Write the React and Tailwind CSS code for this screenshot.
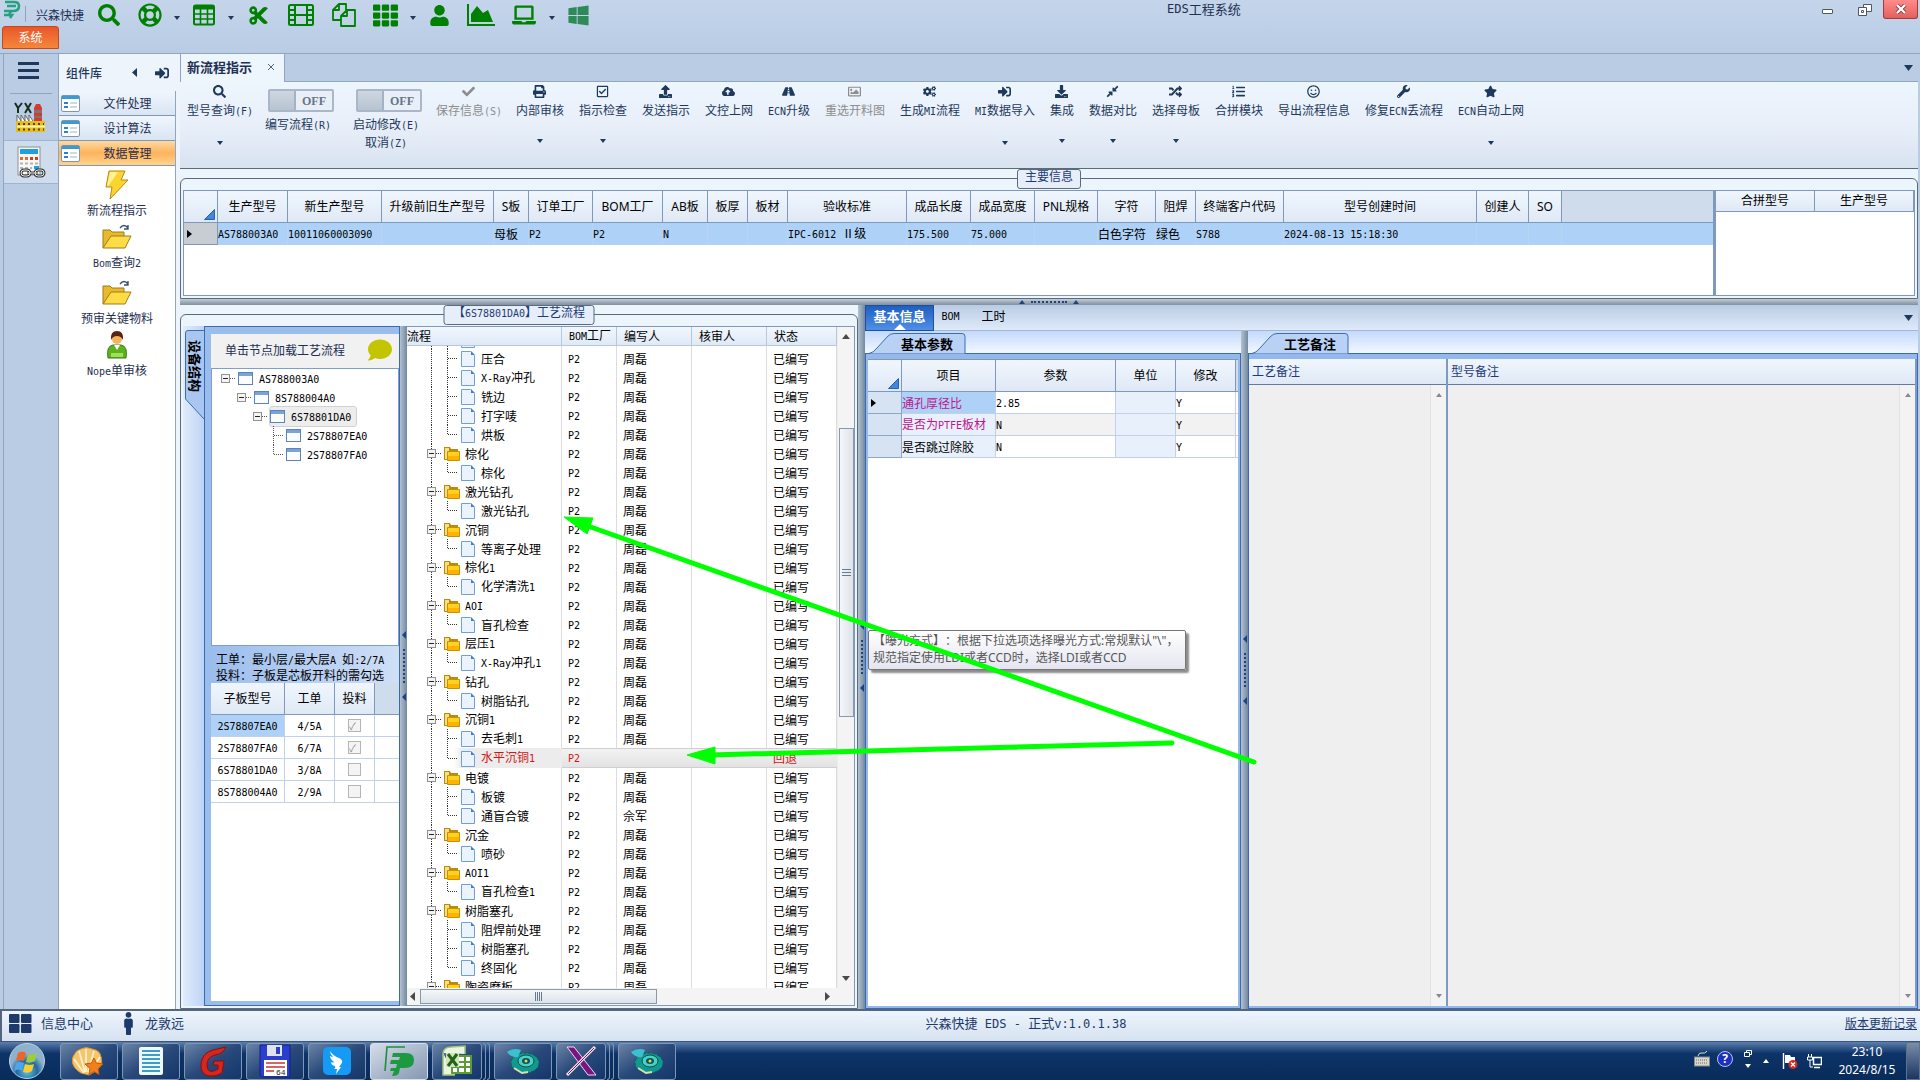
import React from 'react';
import {
  FaSearch, FaRegLifeRing, FaCut, FaTh, FaUser, FaLaptop, FaWindows, FaCheck, FaPrint,
  FaRegCheckSquare, FaUpload, FaCloudUploadAlt, FaRoad, FaRegImage, FaCogs, FaSignInAlt,
  FaDownload, FaCompressAlt, FaRandom, FaListOl, FaRegSmile, FaWrench, FaStar, FaMale, FaComment
} from 'react-icons/fa';

// CJK with half-width latin, so codes keep a 6px pitch at 12px text
function Song({ children, big }) {
  const parts = String(children).split(/([\x20-\x7e]+)/).filter(Boolean);
  const size = big ? 'text-[12px]' : 'text-[10px]';
  return parts.map((part, i) =>
    /^[\x20-\x7e]+$/.test(part)
      ? <span key={i} className={`whitespace-pre font-['DejaVu_Sans_Mono',monospace] ${size}`}>{part}</span>
      : <React.Fragment key={i}>{part}</React.Fragment>
  );
}

const Caret = ({ className = '' }) => (
  <svg width="6" height="4" viewBox="0 0 6 4" className={className} fill="currentColor"><path d="M0 0h6L3 4z" /></svg>
);

const TableIcon = () => (
  <svg width="24" height="24" viewBox="0 0 24 24" fill="none" stroke="currentColor">
    <rect x="2" y="2.500" width="20" height="19" rx="1.500" strokeWidth="2" />
    <path d="M2 4.500h20" strokeWidth="4" />
    <path d="M2 11h20M2 16h20M8.500 5v16M15.500 5v16" strokeWidth="1.600" />
  </svg>
);

const FilmIcon = () => (
  <svg width="26" height="24" viewBox="0 0 26 24" fill="none" stroke="currentColor" strokeWidth="2">
    <rect x="1" y="2" width="24" height="20" rx="1.500" />
    <path d="M7 2v20M19 2v20M7 12h12M1 7h6M1 12h6M1 17h6M19 7h6M19 12h6M19 17h6" />
  </svg>
);

const FilesIcon = () => (
  <svg width="24" height="24" viewBox="0 0 24 24" fill="none" stroke="currentColor" strokeWidth="1.800" strokeLinejoin="round">
    <path d="M9 17H1V7l6-6h7v6M7 1v6H1" />
    <path d="M15 7h8v16H9V13l6-6zM15 7v6H9" />
  </svg>
);

const AreaIcon = () => (
  <svg width="28" height="22" viewBox="0 0 28 22" fill="currentColor">
    <path d="M0 0h2v20h26v2H0zM4 18v-8l6-8 6 7 5-3 5 12z" />
  </svg>
);

const AppLogo = () => (
  <svg width="18" height="19" viewBox="0 0 18 19" fill="none" stroke="#27a082" strokeWidth="2.600">
    <path d="M2 2h9q5 0 5 4 0 5-6 5H7M4 6h9M1 11h7l-2 4M1 15h8l-2 3" />
  </svg>
);

const titleIcons = [
  { name: '查询', w: 'w-[41px]', icon: <FaSearch size={22} /> },
  { name: '帮助', w: 'w-[41px]', icon: <FaRegLifeRing size={24} />, drop: true },
  { name: '表格', w: 'w-[41px]', icon: <TableIcon />, drop: true },
  { name: '剪切', w: 'w-[42px]', icon: <FaCut size={21} /> },
  { name: '胶片', w: 'w-[43px]', icon: <FilmIcon /> },
  { name: '复制', w: 'w-[43px]', icon: <FilesIcon /> },
  { name: '网格', w: 'w-[41px]', icon: <FaTh size={25} />, drop: true },
  { name: '用户', w: 'w-[41px]', icon: <FaUser size={21} /> },
  { name: '图表', w: 'w-[42px]', icon: <AreaIcon /> },
  { name: '电脑', w: 'w-[43px]', icon: <FaLaptop size={24} />, drop: true },
  { name: '窗口', w: 'w-[41px]', icon: <FaWindows size={23} className="text-[#2e8b57]" /> }
];

function TitleBar() {
  return (
    <header className="relative flex h-[54px] shrink-0 flex-col border-b border-[#8fa5c0] bg-gradient-to-b from-[#c4d5eb] to-[#b9cce4]">
      <div className="flex h-[26px] items-start">
        <div className="ml-[3px] w-[22px]"><AppLogo /></div>
        <div className="mt-[6px] h-4 w-px bg-[#8fa3bd]" />
        <div className="ml-[10px] mt-[7px] w-[52px] whitespace-nowrap leading-4">兴森快捷</div>
        <div className="flex h-[30px] items-center text-[#008000]">
          {titleIcons.map((t) => (
            <React.Fragment key={t.name}>
              <button aria-label={t.name} className={`flex items-center justify-center ${t.w}`}>{t.icon}</button>
              {t.drop && <div className="flex w-[13px] justify-center text-[#1e395b]"><Caret className="mt-[5px]" /></div>}
            </React.Fragment>
          ))}
        </div>
        <div className="flex flex-1 pl-[568px] text-[13px] leading-[18px]"><Song big>EDS工程系统</Song></div>
      </div>
      <button className="ml-[2px] h-[23px] w-[57px] rounded-t-[3px] border border-[#c24a1a] bg-gradient-to-b from-[#e8562b] to-[#f5863c] pb-[2px] text-white">系统</button>
      <div className="absolute right-[2px] top-0 flex">
        <button aria-label="最小化" className="flex h-[19px] w-[37px] items-center justify-center"><span className="mt-1 h-[5px] w-[11px] rounded-[1px] border border-[#4c5767] bg-white" /></button>
        <button aria-label="还原" className="flex h-[19px] w-[37px] items-center justify-center">
          <svg width="14" height="13" viewBox="0 0 14 13" fill="#fff" stroke="#4c5767"><path d="M5.500 1.500h8v7h-8z" /><path d="M.5 4.500h8v8h-8z" /><path d="M3.500 7.500h2v2h-2z" /></svg>
        </button>
        <button aria-label="关闭" className="flex h-[19px] w-[35px] items-center justify-center rounded-b-[3px] border border-t-0 border-[#a33b3b] bg-gradient-to-b from-[#ff8b8b] to-[#e2605f]">
          <svg width="12" height="10" viewBox="0 0 12 10"><path d="M2 1l8 8M10 1L2 9" stroke="#8d3b3b" strokeWidth="4" /><path d="M2 1l8 8M10 1L2 9" stroke="#fff" strokeWidth="2.400" /></svg>
        </button>
      </div>
    </header>
  );
}

const FactoryIcon = () => (
  <svg width="32" height="32" viewBox="0 0 32 32">
    <path d="M1 2l3 5v5M8 2L4 7M11 2l6 10M17 2l-6 10" stroke="#14301c" strokeWidth="2" fill="none" />
    <path d="M20 20V7l2-4h4l2 4v13z" fill="#d63a2c" />
    <path d="M20 9h8v3h-8zM20 15h8v2h-8z" fill="#777" />
    <path d="M3 20v-6l4 6v-6l4 6v-6l4 6v-6l4 6" stroke="#666" fill="#fff" />
    <path d="M2 20h29v11H2z" fill="#e9bd1f" />
    <path d="M3 25.500h28" stroke="#fff2a8" strokeWidth="2" />
    <path d="M4 23h26M4 28.500h26" stroke="#554400" strokeWidth="2" strokeDasharray="2 3" />
  </svg>
);

const CalcIcon = () => (
  <svg width="30" height="32" viewBox="0 0 30 32">
    <rect x="2" y="1" width="22" height="28" fill="#f7f7f7" stroke="#8f8f8f" />
    <path d="M4 3h18v5H4z" fill="#1da1e0" />
    <path d="M4 12.500h8" stroke="#e46b2c" strokeWidth="3" strokeDasharray="3 2" />
    <path d="M14 12.500h8" stroke="#c8412b" strokeWidth="3" strokeDasharray="3 2" />
    <path d="M4 17.500h18M4 22h12" stroke="#aeb4bb" strokeWidth="2" strokeDasharray="3 2" />
    <path d="M18 20h5v3h-5z" fill="#1da1e0" />
    <g fill="none" stroke="#333" strokeWidth="3"><rect x="5" y="24" width="9" height="6" rx="3" /><rect x="19" y="24" width="9" height="6" rx="3" /><path d="M11 27h11" /></g>
    <g fill="none" stroke="#eee"><rect x="5" y="24" width="9" height="6" rx="3" /><rect x="19" y="24" width="9" height="6" rx="3" /><path d="M11 27h11" /></g>
  </svg>
);

function Rail() {
  return (
    <nav className="flex w-[55px] shrink-0 flex-col border-l border-[#8fa5c0] bg-[#b9cce4]">
      <button aria-label="菜单" className="mx-[6px] flex h-[40px] flex-col items-center justify-center gap-[4px] border-b border-[#8ea4c2] pb-[6px] pr-[5px]">
        <span className="h-[3px] w-[21px] bg-[#1e395b]" /><span className="h-[3px] w-[21px] bg-[#1e395b]" /><span className="h-[3px] w-[21px] bg-[#1e395b]" />
      </button>
      <button aria-label="工厂" className="flex h-[46px] items-center justify-center pr-[2px]"><FactoryIcon /></button>
      <button aria-label="计算" className="flex h-[44px] items-center justify-center border-y border-[#a0b4d0] bg-[#cfdced]"><CalcIcon /></button>
    </nav>
  );
}

const ListIcon = () => (
  <svg width="19" height="17" viewBox="0 0 19 17">
    <rect x=".5" y=".5" width="18" height="16" rx="1.500" fill="#fff" stroke="#7d95b5" />
    <path d="M1 1h17v3H1z" fill="#3a9bd0" />
    <path d="M3 7h4v2H3zM3 11h4v2H3z" fill="#2d7ed0" />
    <path d="M9 8h7M9 12h7" stroke="#9fb3cc" />
  </svg>
);

const BoltIcon = () => (
  <svg width="24" height="30" viewBox="0 0 24 30">
    <path d="M4 1h16l-4 9h7L5 29l2-12H1z" fill="#fbd52d" stroke="#b48a12" />
    <path d="M5 2h8L4 15l-2 1z" fill="#fff09a" />
  </svg>
);

const FolderIcon = () => (
  <svg width="30" height="25" viewBox="0 0 30 25">
    <path d="M1 24V6h7l2 2h12v5" fill="#e8b92a" stroke="#9f7d1b" />
    <path d="M1 24L9 12h20l-6 12z" fill="#fddc45" stroke="#9f7d1b" />
    <path d="M18 4q4-5 8 0M26 1v4h-4" stroke="#39506f" fill="none" strokeWidth="1.400" />
  </svg>
);

const PersonIcon = () => (
  <svg width="22" height="30" viewBox="0 0 22 30">
    <path d="M2 28q-2-12 5-13h8q7 1 5 13z" fill="#5fb21f" stroke="#3c7a12" />
    <path d="M8 15l3 5 3-5z" fill="#fff" />
    <circle cx="11" cy="9" r="5" fill="#f3b25c" />
    <path d="M5 10q-1-9 6-9t6 9q-2-4-6-4t-6 4z" fill="#5d2216" />
    <path d="M5 23h12v4H5z" fill="#9fe05a" />
  </svg>
);

const tools = [
  { name: '新流程指示', icon: <BoltIcon /> },
  { name: 'Bom查询2', icon: <FolderIcon /> },
  { name: '预审关键物料', icon: <FolderIcon /> },
  { name: 'Nope单审核', icon: <PersonIcon /> }
];

const groups = ['文件处理', '设计算法', '数据管理'];

function ComponentLibrary() {
  return (
    <aside className="flex w-[122px] shrink-0 flex-col border-l border-[#8fa5c0] bg-[#edf4fc]">
      <div className="flex h-[37px] items-center pl-[7px] text-[#1e395b]">
        <span className="w-[66px] font-medium leading-4">组件库</span>
        <svg width="5" height="9" viewBox="0 0 5 9" fill="currentColor"><path d="M5 0v9L0 4.500z" /></svg>
        <FaSignInAlt size={14} className="ml-[18px]" />
      </div>
      <div className="mr-[4px] flex flex-1 flex-col border-r border-[#8fa5c0] bg-white">
        {groups.map((g) => (
          <button
            key={g}
            className={`flex h-[25px] items-center border-b border-[#8397b5] pl-[2px] ${g === '数据管理' ? 'bg-gradient-to-b from-[#ffd9a0] via-[#fdb35a] to-[#ffd48c]' : 'bg-gradient-to-b from-[#f0f6fd] to-[#d9e5f3]'}`}
          >
            <ListIcon />
            <span className="flex-1 text-center leading-4">{g}</span>
          </button>
        ))}
        {tools.map((t) => (
          <button key={t.name} className="flex h-[54px] flex-col items-center justify-end pb-px">
            <span className="flex h-[33px] items-center">{t.icon}</span>
            <span className="leading-[18px]"><Song>{t.name}</Song></span>
          </button>
        ))}
      </div>
    </aside>
  );
}

const ribbon = [
  { name: '保存信息(S)', w: 'w-[64px]', icon: FaCheck, off: true },
  { name: '内部审核', w: 'w-[48px]', icon: FaPrint, drop: true },
  { name: '指示检查', w: 'w-[48px]', icon: FaRegCheckSquare, drop: true },
  { name: '发送指示', w: 'w-[48px]', icon: FaUpload },
  { name: '文控上网', w: 'w-[48px]', icon: FaCloudUploadAlt },
  { name: 'ECN升级', w: 'w-[42px]', icon: FaRoad },
  { name: '重选开料图', w: 'w-[60px]', icon: FaRegImage, off: true },
  { name: '生成MI流程', w: 'w-[60px]', icon: FaCogs },
  { name: 'MI数据导入', w: 'w-[60px]', icon: FaSignInAlt, drop: true },
  { name: '集成', w: 'w-[24px]', icon: FaDownload, drop: true },
  { name: '数据对比', w: 'w-[48px]', icon: FaCompressAlt, drop: true },
  { name: '选择母板', w: 'w-[48px]', icon: FaRandom, drop: true },
  { name: '合拼模块', w: 'w-[48px]', icon: FaListOl },
  { name: '导出流程信息', w: 'w-[72px]', icon: FaRegSmile },
  { name: '修复ECN丢流程', w: 'w-[78px]', icon: FaWrench },
  { name: 'ECN自动上网', w: 'w-[66px]', icon: FaStar, drop: true }
];

function RibbonButton({ item }) {
  const Icon = item.icon;
  return (
    <button disabled={item.off} className={`flex flex-col items-center ${item.w} ${item.off ? 'text-[#8d8d8d]' : 'text-[#1e395b]'}`}>
      <Icon size={13} className="mr-[2px]" />
      <span className="mt-[4px] whitespace-nowrap leading-4"><Song>{item.name}</Song></span>
      {item.drop && <Caret className="mt-[21px]" />}
    </button>
  );
}

function Toggle({ label, second }) {
  return (
    <div className="flex w-[66px] flex-col items-center text-[#1e395b]">
      <button role="switch" aria-checked="false" aria-label={label} className="mt-[4px] flex h-[23px] w-[66px] shrink-0 items-center rounded-[2px] border-2 border-[#a9b7c8] bg-[#e9eff6]">
        <span className="h-full w-[26px] border-r-2 border-[#a3b2c4] bg-gradient-to-b from-[#ced7e1] to-[#b7c3d1]" />
        <span className="flex-1 text-center font-['Liberation_Serif',serif] font-bold text-[#66758a]">OFF</span>
      </button>
      <span className="mr-[6px] mt-[4px] whitespace-nowrap leading-4"><Song>{label}</Song></span>
      {second && <span className="mr-[6px] whitespace-nowrap leading-4"><Song>{second}</Song></span>}
    </div>
  );
}

function Ribbon() {
  return (
    <div className="flex h-[87px] shrink-0 items-start gap-[15px] border-b border-[#5b6b7c] bg-gradient-to-b from-[#edf5fd] via-[#e8eff9] to-[#d8e3f0] pl-[7px] pt-[3px]">
      <RibbonButton item={{ name: '型号查询(F)', w: 'w-[66px]', icon: FaSearch, drop: true }} />
      <Toggle label="编写流程(R)" />
      <div className="ml-[7px]"><Toggle label="启动修改(E)" second="取消(Z)" /></div>
      {ribbon.map((item) => <RibbonButton key={item.name} item={item} />)}
    </div>
  );
}

const Corner = () => (
  <svg width="11" height="11" viewBox="0 0 11 11" className="ml-auto mr-[2px] mt-[16px]"><path d="M10.500.5v10H.5z" fill="#3f86dd" stroke="#2b5fae" /></svg>
);

const Pointer = () => (
  <svg width="5" height="8" viewBox="0 0 5 8" className="ml-[3px]"><path d="M0 0v8l5-4z" /></svg>
);

const mainCols = [
  { head: '生产型号', w: 'w-[70px]', val: 'AS788003A0' },
  { head: '新生产型号', w: 'w-[94px]', val: '10011060003090' },
  { head: '升级前旧生产型号', w: 'w-[112px]', val: '' },
  { head: 'S板', w: 'w-[35px]', val: '母板' },
  { head: '订单工厂', w: 'w-[64px]', val: 'P2' },
  { head: 'BOM工厂', w: 'w-[70px]', val: 'P2' },
  { head: 'AB板', w: 'w-[45px]', val: 'N' },
  { head: '板厚', w: 'w-[40px]', val: '' },
  { head: '板材', w: 'w-[40px]', val: '' },
  { head: '验收标准', w: 'w-[119px]', val: 'IPC-6012 Ⅱ级' },
  { head: '成品长度', w: 'w-[64px]', val: '175.500' },
  { head: '成品宽度', w: 'w-[64px]', val: '75.000' },
  { head: 'PNL规格', w: 'w-[63px]', val: '' },
  { head: '字符', w: 'w-[58px]', val: '白色字符' },
  { head: '阻焊', w: 'w-[40px]', val: '绿色' },
  { head: '终端客户代码', w: 'w-[88px]', val: 'S788' },
  { head: '型号创建时间', w: 'w-[193px]', val: '2024-08-13 15:18:30' },
  { head: '创建人', w: 'w-[52px]', val: '' },
  { head: 'SO', w: 'w-[33px]', val: '' }
];

const headCell = "border-b border-r border-[#8098bd] bg-gradient-to-b from-[#f0f6fd] to-[#dfe9f5] p-0 font-['Noto_Sans','Noto_Sans_CJK_SC',sans-serif] font-normal";

function Legend({ children, w }) {
  return (
    <div className={`absolute left-1/2 top-0 flex h-[20px] -translate-x-1/2 justify-center rounded-[3px] border border-[#5b6b7c] bg-[#e6eff9] leading-[11px] text-[#1e3a78] ${w}`}>
      <span><Song>{children}</Song></span>
    </div>
  );
}

function MainInfo() {
  return (
    <section className="relative flex h-[130px] shrink-0 flex-col bg-[#ecf4fc] pt-[9px]">
      <div className="flex flex-1 rounded-t-[6px] border border-[#5b6b7c] px-[2px] pb-[2px] pt-[11px]">
        <div className="min-w-0 flex-1 overflow-hidden border border-[#8098bd] bg-white">
          <table className="w-full table-fixed border-separate border-spacing-0 text-black">
            <thead>
              <tr className="h-[32px]">
                <th className={`w-[34px] ${headCell}`}><Corner /></th>
                {mainCols.map((c) => <th key={c.head} className={`${c.w} whitespace-nowrap ${headCell}`}>{c.head}</th>)}
                <th className="border-b border-[#8098bd] bg-[#cfdcec]" />
              </tr>
            </thead>
            <tbody>
              <tr className="h-[22px] bg-[#aed2f7]">
                <td className="border-r border-b border-[#8098bd] bg-[#c8cdd4] p-0"><Pointer /></td>
                {mainCols.map((c) => <td key={c.head} className="whitespace-nowrap border-r border-[#b9d4f2] p-0 leading-4"><Song>{c.val}</Song></td>)}
                <td />
              </tr>
            </tbody>
          </table>
        </div>
        <div className="w-[201px] shrink-0 border border-l-2 border-[#8098bd] bg-white">
          <table className="w-full table-fixed border-separate border-spacing-0 text-black">
            <thead><tr className="h-[21px]"><th className={headCell}>合拼型号</th><th className={headCell}>生产型号</th></tr></thead>
          </table>
        </div>
      </div>
      <Legend w="w-[64px]">主要信息</Legend>
    </section>
  );
}

function HGrip() {
  return (
    <div className="flex h-[6px] shrink-0 items-center justify-center gap-[6px] bg-gradient-to-b from-[#c3ccd4] to-[#7f909f]">
      <Caret className="rotate-180 text-[#1f4380]" />
      <span className="w-[36px] border-t-2 border-dotted border-[#1f4380]" />
      <Caret className="rotate-180 text-[#1f4380]" />
    </div>
  );
}

function VGrip() {
  return (
    <div className="flex w-[7px] shrink-0 flex-col items-center justify-center gap-[10px] bg-gradient-to-r from-[#b4c2cf] to-[#73899f] text-[#1f4380]">
      <svg width="4" height="8" viewBox="0 0 4 8" fill="currentColor"><path d="M4 0v8L0 4z" /></svg>
      <span className="h-[34px] border-l-2 border-dotted border-[#1f4380]" />
      <svg width="4" height="8" viewBox="0 0 4 8" fill="currentColor"><path d="M4 0v8L0 4z" /></svg>
    </div>
  );
}

const WindowIcon = () => (
  <svg width="15" height="13" viewBox="0 0 15 13" className="shrink-0"><rect x=".5" y=".5" width="14" height="12" fill="#fafcff" stroke="#5b84bd" /><path d="M1 1h13v3H1z" fill="#7ba3d8" /></svg>
);

const boards = [
  { code: 'AS788003A0', pad: 'pl-[9px]', open: true },
  { code: '8S788004A0', pad: 'pl-[25px]', open: true },
  { code: '6S78801DA0', pad: 'pl-[41px]', open: true, active: true },
  { code: '2S78807EA0', pad: 'pl-[57px]' },
  { code: '2S78807FA0', pad: 'pl-[57px]', last: true }
];

const MinusBox = () => (
  <svg width="17" height="19" viewBox="0 0 17 19" className="shrink-0">
    <rect x=".5" y="5.500" width="8" height="8" fill="#f4f4f4" stroke="#919191" />
    <path d="M2 9.500h5" stroke="#222" /><path d="M9 9.500h6" stroke="#555" strokeDasharray="1 1" />
  </svg>
);

const orders = [
  { code: '2S78807EA0', layer: '4/5A', used: true },
  { code: '2S78807FA0', layer: '6/7A', used: true },
  { code: '6S78801DA0', layer: '3/8A', used: false },
  { code: '8S788004A0', layer: '2/9A', used: false }
];

function BoardPanel() {
  return (
    <div className="flex w-[217px] shrink-0">
      <div className="w-[21px] bg-gradient-to-r from-[#e2ecfb] to-[#bdd3f5] pl-[2px] pt-[4px]">
        <button className="relative flex h-[90px] w-[19px] items-start justify-center pt-[10px]">
          <svg width="19" height="90" viewBox="0 0 19 90" className="absolute inset-0"><path d="M19 .5H3Q.5.500.5 3v66l18.500 20" fill="#a9c6f1" stroke="#3d6db0" /></svg>
          <span className="relative text-[13px] font-bold leading-4 text-black [text-orientation:sideways] [writing-mode:vertical-rl]">设备结构</span>
        </button>
      </div>
      <div className="flex min-w-0 flex-1 flex-col border border-[#3a6ab3] bg-[#9bbdec] pb-[4px] pl-[6px] pt-[7px]">
        <div className="flex h-[34px] items-center justify-between bg-[#f1f1f1] pb-[2px] pl-[14px] pr-[7px]">
          <span className="leading-4">单击节点加载工艺流程</span>
          <FaComment size={24} className="text-[#c4c400]" />
        </div>
        <div className="h-[278px] border border-[#7d9fd0] bg-white">
          {boards.map((b) => (
            <div key={b.code} className={`flex h-[19px] items-center ${b.pad}`}>
              {b.open
                ? <MinusBox />
                : <svg width="17" height="19" viewBox="0 0 17 19" className="shrink-0"><path d={b.last ? 'M4.500 0v10M5 9.500h10' : 'M4.500 0v19M5 9.500h10'} stroke="#555" strokeDasharray="1 1" fill="none" /></svg>}
              <div className={`flex h-[19px] items-center gap-[6px] pr-[5px] leading-4 text-black ${b.active ? 'rounded-[2px] bg-[#ededed] outline outline-[#d2d2d2]' : ''}`}>
                <WindowIcon /><span><Song>{b.code}</Song></span>
              </div>
            </div>
          ))}
        </div>
        <div className="flex h-[37px] flex-col justify-end bg-gradient-to-r from-[#9bbdec] to-[#cfdff7] pb-px pl-[5px] leading-[14px] text-black">
          <span className="whitespace-nowrap"><Song>工单：最小层/最大层A 如:2/7A</Song></span>
          <span className="whitespace-nowrap"><Song>投料：子板是芯板开料的需勾选</Song></span>
        </div>
        <div className="flex-1 bg-white">
          <table className="w-full table-fixed border-separate border-spacing-0 text-center text-black">
            <thead>
              <tr className="h-[32px]">
                <th className={`w-[74px] ${headCell}`}>子板型号</th>
                <th className={`w-[50px] ${headCell}`}>工单</th>
                <th className={`w-[40px] ${headCell}`}>投料</th>
                <th className="border-b border-[#8098bd] bg-[#cfdcec]" />
              </tr>
            </thead>
            <tbody>
              {orders.map((o, i) => (
                <tr key={o.code} className="h-[22px]">
                  <td className={`border-b border-r border-[#c3d0ea] p-0 leading-4 ${i === 0 ? 'bg-[#aed2f7]' : ''}`}><Song>{o.code}</Song></td>
                  <td className="border-b border-r border-[#c3d0ea] p-0 leading-4"><Song>{o.layer}</Song></td>
                  <td className="border-b border-r border-[#c3d0ea] p-0">
                    <input
                      type="checkbox" aria-label={o.code} disabled defaultChecked={o.used}
                      className="mx-auto block h-[13px] w-[13px] appearance-none border border-[#b5b5b5] bg-[#f4f4f4] text-[10px] leading-[11px] text-[#8a8a8a] checked:before:block checked:before:content-['✓']"
                    />
                  </td>
                  <td className="border-b border-[#c3d0ea]" />
                </tr>
              ))}
            </tbody>
          </table>
        </div>
      </div>
    </div>
  );
}

const flow = [
  { name: 'OPEN' },
  { name: '压合' },
  { name: 'X-Ray冲孔' },
  { name: '铣边' },
  { name: '打字唛' },
  { name: '烘板', last: true },
  { name: '棕化', group: true },
  { name: '棕化', last: true },
  { name: '激光钻孔', group: true },
  { name: '激光钻孔', last: true },
  { name: '沉铜', group: true },
  { name: '等离子处理', last: true },
  { name: '棕化1', group: true },
  { name: '化学清洗1', last: true },
  { name: 'AOI', group: true },
  { name: '盲孔检查', last: true },
  { name: '层压1', group: true },
  { name: 'X-Ray冲孔1', last: true },
  { name: '钻孔', group: true },
  { name: '树脂钻孔', last: true },
  { name: '沉铜1', group: true },
  { name: '去毛刺1' },
  { name: '水平沉铜1', last: true, back: true },
  { name: '电镀', group: true },
  { name: '板镀' },
  { name: '通盲合镀', last: true, writer: '佘军' },
  { name: '沉金', group: true },
  { name: '喷砂', last: true },
  { name: 'AOI1', group: true },
  { name: '盲孔检查1', last: true },
  { name: '树脂塞孔', group: true },
  { name: '阻焊前处理' },
  { name: '树脂塞孔' },
  { name: '终固化', last: true },
  { name: '陶瓷磨板', group: true }
];

function NodeArt({ node }) {
  if (node.group) {
    return (
      <svg width="54" height="19" viewBox="0 0 54 19" className="shrink-0">
        <path d="M24.500 0v19M29 9.500h6" stroke="#333" strokeDasharray="1 1" />
        <rect x="20.500" y="5.500" width="8" height="8" fill="#f4f4f4" stroke="#919191" /><path d="M22 9.500h5" stroke="#222" />
        <path d="M37 16V3h6l1 2h7v11z" fill="#b98a10" />
        <path d="M38 4h4v11h-4z" fill="#f6df86" />
        <path d="M40.500 7.500h12v9h-12z" fill="#ffd21f" stroke="#c98f07" />
        <path d="M41 12h11v4H41z" fill="#fdb400" />
      </svg>
    );
  }
  return (
    <svg width="70" height="19" viewBox="0 0 70 19" className="shrink-0">
      <path d={node.last ? 'M24.500 0v19M40.500 0v10M41 9.500h9' : 'M24.500 0v19M40.500 0v19M41 9.500h9'} stroke="#333" strokeDasharray="1 1" fill="none" />
      <path d="M54.500 2.500h9l4 4v11h-13z" fill="#eaf3fe" stroke="#6f9fd8" />
      <path d="M64 2v4h4z" fill="#3f7ed0" />
    </svg>
  );
}

const FlowCols = () => (
  <colgroup>
    <col className="w-[155px]" /><col className="w-[55px]" /><col className="w-[75px]" /><col className="w-[75px]" /><col />
  </colgroup>
);

const flowHeads = [
  { name: '流程', pad: '' },
  { name: 'BOM工厂', pad: 'pl-[7px]' },
  { name: '编写人', pad: 'pl-[7px]' },
  { name: '核审人', pad: 'pl-[7px]' },
  { name: '状态', pad: 'pl-[7px]' }
];

function FlowTree() {
  return (
    <div className="flex min-w-0 flex-1 flex-col border border-l-0 border-[#8098bd] bg-white text-black">
      <div className="flex min-h-0 flex-1">
        <div className="flex min-w-0 flex-1 flex-col">
          <table className="w-full shrink-0 table-fixed border-separate border-spacing-0 text-left">
            <FlowCols />
            <thead>
              <tr className="h-[18px]">
                {flowHeads.map((h) => <th key={h.name} className={`whitespace-nowrap border-b border-r border-[#b6c7de] bg-gradient-to-b from-[#f2f7fd] to-[#dfe9f6] p-0 font-normal leading-4 ${h.pad}`}><Song>{h.name}</Song></th>)}
              </tr>
            </thead>
          </table>
          <div className="h-0 flex-1 overflow-hidden">
            <table className="-mt-4 w-full table-fixed border-separate border-spacing-0">
              <FlowCols />
              <tbody>
                {flow.map((n, i) => {
                  const cell = n.back
                    ? 'border-y border-[#cfcfcf] bg-gradient-to-b from-[#f2f2f2] to-[#e3e3e3] p-0 pl-[6px] leading-4 text-[#d01616]'
                    : 'border-r border-[#dcdcdc] p-0 pl-[6px] leading-4';
                  return (
                    <tr key={i} className="h-[19px]">
                      <td className={`p-0 ${n.back ? 'bg-gradient-to-r from-white from-30% to-[#ececec] to-35% text-[#d01616]' : 'border-r border-[#dcdcdc]'}`}>
                        <div className="flex h-[19px] items-center gap-[4px] whitespace-nowrap leading-4"><NodeArt node={n} /><span><Song>{n.name}</Song></span></div>
                      </td>
                      <td className={cell}><Song>P2</Song></td>
                      <td className={cell}>{n.back ? '' : n.writer || '周磊'}</td>
                      <td className={cell} />
                      <td className={cell}>{n.back ? '回退' : '已编写'}</td>
                    </tr>
                  );
                })}
              </tbody>
            </table>
          </div>
        </div>
        <div className="flex w-[17px] shrink-0 flex-col items-center border-l border-[#ececec] bg-[#f4f4f4] py-[7px] text-[#4a4a4a]">
          <svg width="8" height="5" viewBox="0 0 8 5" fill="currentColor"><path d="M0 5h8L4 0z" /></svg>
          <div className="mt-[89px] flex h-[289px] w-[15px] flex-col items-center justify-center gap-[2px] border border-[#8b98a8] bg-gradient-to-r from-[#f4f7fa] to-[#dde3ea]">
            <span className="h-px w-[9px] bg-[#6a7a8c]" /><span className="h-px w-[9px] bg-[#6a7a8c]" /><span className="h-px w-[9px] bg-[#6a7a8c]" />
          </div>
          <svg width="8" height="5" viewBox="0 0 8 5" fill="currentColor" className="mt-auto"><path d="M0 0h8L4 5z" /></svg>
        </div>
      </div>
      <div className="flex h-[17px] shrink-0 items-center bg-[#f4f4f4] pl-[3px] pr-[24px] text-[#4a4a4a]">
        <svg width="5" height="9" viewBox="0 0 5 9" fill="currentColor"><path d="M5 0v9L0 4.500z" /></svg>
        <div className="ml-[5px] flex h-[15px] w-[237px] items-center justify-center gap-[1px] border border-[#8b98a8] bg-gradient-to-b from-[#f4f7fa] to-[#dde3ea]">
          <span className="h-[9px] w-px bg-[#6a7a8c]" /><span className="h-[9px] w-px bg-[#6a7a8c]" /><span className="h-[9px] w-px bg-[#6a7a8c]" /><span className="h-[9px] w-px bg-[#6a7a8c]" />
        </div>
        <svg width="5" height="9" viewBox="0 0 5 9" fill="currentColor" className="ml-auto"><path d="M0 0v9l5-4.500z" /></svg>
      </div>
    </div>
  );
}

function ProcessArea() {
  return (
    <section className="relative flex w-[678px] shrink-0 flex-col bg-[#ecf4fc] pt-[9px]">
      <div className="flex min-h-0 flex-1 rounded-t-[6px] border border-[#5b6b7c] px-[2px] pb-[2px] pt-[11px]">
        <BoardPanel />
        <VGrip />
        <FlowTree />
      </div>
      <Legend w="w-[151px]">【6S78801DA0】工艺流程</Legend>
    </section>
  );
}

function SlantTab({ children }) {
  return (
    <div className="h-[23px] shrink-0 border-b border-[#3a6ab3] bg-gradient-to-b from-[#c3d9fb] to-[#f3f8ff] pl-[4px] pt-[2px]">
      <button className="relative block h-[21px] w-[97px] pl-[32px] text-left text-[13px] font-bold leading-[18px] text-black">
        <svg width="97" height="21" viewBox="0 0 97 21" className="absolute inset-0"><path d="M0 20.500Q4 20 8 15L18 4q3-3.500 7-3.500h68q3 0 3 3v17" fill="#b9d1f5" stroke="#3d6db0" /></svg>
        <span className="relative">{children}</span>
      </button>
    </div>
  );
}

const params = [
  { item: '通孔厚径比', value: '2.85', red: true },
  { item: '是否为PTFE板材', value: 'N', red: true },
  { item: '是否跳过除胶', value: 'N' }
];

const bodyCell = 'whitespace-nowrap border-b border-r border-[#c3d0ea] p-0 leading-4';

function ParamsPanel() {
  return (
    <div className="flex w-[376px] shrink-0 flex-col">
      <SlantTab>基本参数</SlantTab>
      <div className="flex flex-1 flex-col border-x border-b border-[#3a6ab3] bg-[#94b8ec] px-[2px] pb-[2px] pt-[5px]">
        <div className="flex-1 border-t border-[#8098bd] bg-white">
          <table className="w-full table-fixed border-separate border-spacing-0 text-black">
            <thead>
              <tr className="h-[32px]">
                <th className={`w-[34px] ${headCell}`}><Corner /></th>
                <th className={`w-[94px] ${headCell}`}>项目</th>
                <th className={`w-[120px] ${headCell}`}>参数</th>
                <th className={`w-[60px] ${headCell}`}>单位</th>
                <th className={`w-[60px] ${headCell}`}>修改</th>
                <th className="border-b border-[#8098bd] bg-[#cfdcec] p-0" />
              </tr>
            </thead>
            <tbody>
              {params.map((p, i) => (
                <tr key={p.item} className="h-[22px]">
                  <td className="border-b border-r border-[#8fa5c8] bg-[#d6e3f2] p-0">{i === 0 && <Pointer />}</td>
                  <td className={`${bodyCell} ${i === 0 ? 'bg-[#aed2f7]' : 'bg-[#e8f1fb]'} ${p.red ? 'text-[#c0148c]' : ''}`}><Song>{p.item}</Song></td>
                  <td className={`${bodyCell} ${i === 1 ? 'bg-[#f2f2f2]' : ''}`}><Song>{p.value}</Song></td>
                  <td className={`${bodyCell} bg-[#e8f1fb]`} />
                  <td className={`${bodyCell} ${i === 1 ? 'bg-[#f2f2f2]' : ''}`}><Song>Y</Song></td>
                  <td className="border-b border-[#c3d0ea] p-0" />
                </tr>
              ))}
            </tbody>
          </table>
        </div>
      </div>
    </div>
  );
}

function NoteColumn({ title, w }) {
  return (
    <div className={`flex flex-col border-r-2 border-[#7e9ac0] ${w}`}>
      <div className="h-[26px] border-b border-[#5f7ba5] bg-gradient-to-b from-[#f0f6fd] to-[#dfe9f5] pl-[3px] leading-[24px] text-[#1e3a78]">{title}</div>
      <div className="flex flex-1 justify-end bg-[#efefef]">
        <div className="flex w-[16px] flex-col items-center justify-between border-l border-[#e2e2e2] bg-[#f3f3f3] py-[8px] text-[#8a8a8a]">
          <Caret className="rotate-180" /><Caret />
        </div>
      </div>
    </div>
  );
}

function DetailArea() {
  return (
    <section className="flex min-w-0 flex-1 flex-col">
      <div className="flex h-[26px] shrink-0 items-center border-b border-[#a3b7d1] bg-gradient-to-b from-[#b9cce5] to-[#dfeafa] text-black">
        <button className="relative h-[26px] w-[69px] border border-[#1f4f9c] bg-gradient-to-b from-[#1f5fc0] to-[#4f8fe6] pb-1 text-[13px] font-bold leading-5 text-white">
          基本信息
          <svg width="12" height="6" viewBox="0 0 12 6" className="absolute bottom-0 left-[28px]" fill="#fff"><path d="M0 6l6-6 6 6z" /></svg>
        </button>
        <button className="w-[33px] pb-1 text-center"><Song>BOM</Song></button>
        <button className="ml-[10px] w-[33px] pb-1 text-center">工时</button>
        <svg width="9" height="6" viewBox="0 0 9 6" fill="#1e395b" className="ml-auto mr-[5px]"><path d="M0 0h9L4.500 6z" /></svg>
      </div>
      <div className="flex min-h-0 flex-1">
        <ParamsPanel />
        <VGrip />
        <div className="flex min-w-0 flex-1 flex-col">
          <SlantTab>工艺备注</SlantTab>
          <div className="flex flex-1 border-x border-b border-[#3a6ab3] bg-[#94b8ec] pb-[2px] pt-[5px]">
            <NoteColumn title="工艺备注" w="w-[199px] shrink-0" />
            <NoteColumn title="型号备注" w="flex-1" />
          </div>
        </div>
      </div>
    </section>
  );
}

function StatusBar() {
  return (
    <footer className="flex h-[32px] shrink-0 items-center border-l-2 border-t-2 border-[#54667d] bg-gradient-to-b from-[#edf5fd] to-[#d6e2f0] pb-[6px] pl-[7px] pr-[3px] text-[#1e3a6b]">
      <div className="flex w-[300px] items-center">
        <svg width="23" height="19" viewBox="0 0 23 19" fill="#1e3a6b"><rect width="10.500" height="9" rx="1" /><rect x="12" width="10.500" height="9" rx="1" /><rect y="10" width="10.500" height="9" rx="1" /><rect x="12" y="10" width="10.500" height="9" rx="1" /></svg>
        <span className="ml-[9px] text-[13px]">信息中心</span>
        <FaMale size={23} className="ml-[24px]" />
        <span className="ml-[5px] text-[13px]">龙敦远</span>
      </div>
      <span className="flex-1 whitespace-nowrap text-center text-[13px]"><Song big>兴森快捷 EDS - 正式v:1.0.1.38</Song></span>
      <div className="flex w-[174px] justify-end"><a href="#log" className="underline">版本更新记录</a></div>
    </footer>
  );
}

const ShellArt = () => (
  <svg width="34" height="30" viewBox="0 0 34 30">
    <path d="M9 27C-1 21-1 13 2 9q2-5 7-6 5-3 11 0 8 1 9 8 3 9-7 15l-5 3z" fill="#f4c56c" stroke="#d99434" />
    <path d="M12 27L2 13M13 26L7 5M14 26V3M16 26L22 5M17 27L28 11" stroke="#fff0c8" strokeWidth="1.800" />
    <path d="M22 12l2.500 5 6.500 1-5 4.500 1 6-5-3-5 3 1-6-5-4.500 6.500-1z" fill="#f07f1c" stroke="#c75b0a" />
  </svg>
);
const DocArt = () => (
  <svg width="26" height="30" viewBox="0 0 26 30">
    <rect x="1" y="1" width="24" height="28" rx="2" fill="#eef7fb" />
    <path d="M4 5h18M4 9h18M4 13h18M4 17h18M4 21h18M4 25h18" stroke="#3c9dc6" strokeWidth="1.800" />
  </svg>
);
const RedArt = () => (
  <svg width="30" height="32" viewBox="0 0 30 32"><path d="M28 2q-3 7-11 8-8 2-8 10t7 6l4-2v-4h-5l1-4h10l-2 12q-6 4-13 3Q2 29 3 19 4 8 15 5z" fill="#d7261e" stroke="#8e0f0b" /></svg>
);
const DiskArt = () => (
  <svg width="32" height="34" viewBox="0 0 32 34">
    <path d="M1 1h30v32H3l-2-2z" fill="#2a3fd0" stroke="#15207e" />
    <path d="M8 1h15v11H8z" fill="#dfe3ea" /><path d="M17 3h4v7h-4z" fill="#2a3fd0" />
    <path d="M5 16h23v16H5z" fill="#fff" /><path d="M7 19h19M7 23h19M7 27h8" stroke="#c33" strokeWidth="1.300" />
    <text x="17" y="31" fontSize="8" fontFamily="Liberation Mono" fill="#222">64</text>
  </svg>
);
const WingArt = () => (
  <svg width="28" height="28" viewBox="0 0 28 28"><rect width="28" height="28" rx="5" fill="#159bf5" /><path d="M7 4q3 5 9 7 4 2 3 5l-3 4h2l-5 7 1-5h-3q2-1 1-3-4-1-4-4 2 1 3 0-4-3-4-6 2 1 3 1-3-3-3-6z" fill="#fff" /></svg>
);
const GreenPArt = () => (
  <svg width="32" height="32" viewBox="0 0 32 32">
    <path d="M2 26L4 2h18" fill="none" stroke="#1d8f3d" strokeWidth="1.600" />
    <path d="M10 8h13q8 0 8 7 0 8-9 8h-5l-1 5q-1 3-7 3l2-5H7l1-3h5l1-4H7l1-4h8l1-3h-8z" fill="#1d9a41" />
  </svg>
);
const ExcelArt = () => (
  <svg width="32" height="32" viewBox="0 0 32 32">
    <path d="M2 8q1-6 8-6l14-1v8M2 8v22h12" fill="#eaf4df" stroke="#9fc37d" strokeWidth="1.500" />
    <path d="M11 11h19v17H11zM11 17h19M11 22h19M17 11v17M24 11v17" fill="#fff" stroke="#5c9b35" strokeWidth="2" />
    <path d="M5 8h13v14H5z" fill="#cfe6b7" /><path d="M7 9l9 12M16 9L7 21" stroke="#25631b" strokeWidth="3" />
  </svg>
);
const RingArt = () => (
  <svg width="34" height="28" viewBox="0 0 34 28">
    <ellipse cx="19" cy="16" rx="14" ry="10" fill="#11998e" stroke="#0b5f5b" strokeDasharray="3 2" />
    <ellipse cx="20" cy="14" rx="8" ry="6" fill="#46d3c5" stroke="#0a4f55" /><ellipse cx="20" cy="14" rx="4" ry="3" fill="#184e5c" /><circle cx="20" cy="14" r="1.500" fill="#d8e04a" />
    <path d="M1 5q7-5 14-2l-3 7Q5 11 1 5z" fill="#3cc0cf" /><path d="M8 21l8 5 6-1" stroke="#d9dfb0" strokeWidth="2" fill="none" />
  </svg>
);
const XArt = () => (
  <svg width="32" height="30" viewBox="0 0 32 30">
    <path d="M2 1h7l22 28h-8z" fill="#7a1580" stroke="#f0d8f2" /><path d="M30 1L2 29" stroke="#f5e6f5" strokeWidth="3" /><path d="M29 2L3 28" stroke="#7a1580" />
  </svg>
);

const apps = [
  { name: '贝壳', art: <ShellArt /> },
  { name: '文档', art: <DocArt /> },
  { name: '工程', art: <RedArt /> },
  { name: '磁盘', art: <DiskArt /> },
  { name: '钉钉', art: <WingArt /> },
  { name: 'EDS', art: <GreenPArt />, active: true },
  { name: 'Excel', art: <ExcelArt />, stack: true },
  { name: 'Genesis', art: <RingArt /> },
  { name: 'Xmanager', art: <XArt />, stack: true },
  { name: 'Genesis 2', art: <RingArt /> }
];

function Taskbar() {
  return (
    <div className="flex h-[39px] shrink-0 items-center border-t border-[#3c5476] bg-gradient-to-b from-[#5c7fae] via-[#0d3468] via-30% to-[#082b5a] pl-[8px] font-['Noto_Sans','Noto_Sans_CJK_SC',sans-serif] text-white">
      <button aria-label="开始" className="mr-[14px]">
        <svg width="38" height="38" viewBox="0 0 38 38">
          <defs><radialGradient id="orb" cy=".8"><stop offset="0" stopColor="#58c3ea" /><stop offset=".6" stopColor="#23699f" /><stop offset="1" stopColor="#8fb2cc" /></radialGradient></defs>
          <circle cx="19" cy="19" r="17.500" fill="url(#orb)" stroke="#b9d0e0" />
          <path d="M10 11q4-3 8 0l-2 8q-4-2-8 0z" fill="#f0642a" /><path d="M20 12q4 2 9-1l-2 8q-5 3-9 1z" fill="#9bce3c" />
          <path d="M8 21q4-2 8 0l-2 8q-3-3-8 0z" fill="#4da6ec" /><path d="M17 22q5 2 9 0l-2 7q-4 3-9 1z" fill="#fccb2f" />
        </svg>
      </button>
      <div className="flex gap-[4px]">
        {apps.map((a) => (
          <div key={a.name} className="flex w-[58px] gap-px">
            <button
              aria-label={a.name}
              className={`flex h-[37px] flex-1 items-center justify-center rounded-[3px] border ${a.active ? 'border-[#d4deea] bg-gradient-to-br from-[#d5dde8] to-[#8497b3]' : 'border-[#7f97b7] bg-gradient-to-br from-[#6c84a6] via-[#28497a] to-[#15366a]'}`}
            >
              {a.art}
            </button>
            {a.stack && <><span className="w-[3px] rounded-r-[3px] border border-l-0 border-[#7f97b7]" /><span className="w-[3px] rounded-r-[3px] border border-l-0 border-[#7f97b7]" /></>}
          </div>
        ))}
      </div>
      <div className="ml-auto flex items-center">
        <svg width="16" height="18" viewBox="0 0 16 18" className="mb-[4px] mr-[7px]"><path d="M4 6q1-4 4-3t5-2" stroke="#ddd" fill="none" /><rect x=".5" y="7" width="15" height="9" fill="#d9d6cc" stroke="#888" /><path d="M2 10h12M2 13h12" stroke="#666" strokeDasharray="1 1" /></svg>
        <span className="mb-[4px] mr-[11px] flex h-4 w-4 items-center justify-center rounded-full border border-[#b9c4f5] bg-[#1d2fc0] text-xs font-bold leading-none">?</span>
        <span className="mb-[4px] mr-[11px] flex flex-col items-center gap-[7px]">
          <svg width="8" height="7" viewBox="0 0 8 7" fill="none" stroke="#fff"><path d="M2.500 2V.5h5v4H6M.5 2.500h5v4h-5z" /></svg>
          <Caret />
        </span>
        <Caret className="mr-[13px] rotate-180" />
        <svg width="16" height="16" viewBox="0 0 16 16" className="mr-[9px]"><path d="M1.500 0v16" stroke="#fff" strokeWidth="1.400" /><path d="M3 2h5l1 2h4v6H3z" fill="#fff" /><circle cx="11" cy="11.500" r="4.500" fill="#d6291f" /><path d="M9 9.500l4 4M13 9.500l-4 4" stroke="#fff" strokeWidth="1.400" /></svg>
        <svg width="15" height="15" viewBox="0 0 15 15" fill="none" stroke="#fff" className="mr-[14px]"><path d="M1.500 0v3M4.500 0v3M.5 3h5v3h-5zM3 6v7h3" /><path d="M6.500 3.500h8v7h-8zM7 13.500h6" strokeWidth="1.500" /></svg>
        <div className="w-[62px] text-center leading-[18px]"><div>23:10</div><div>2024/8/15</div></div>
        <button aria-label="显示桌面" className="ml-[8px] h-[38px] w-[14px] border border-[#5a7294] bg-gradient-to-b from-[#7b8ea9] to-[#1b365f]" />
      </div>
    </div>
  );
}

export default function App() {
  return (
    <div className="relative flex h-screen flex-col overflow-hidden bg-[#b9cce4] font-['Noto_Sans_CJK_SC',sans-serif] text-xs text-[#1e2f52]">
      <TitleBar />
      <main className="flex min-h-0 flex-1 pl-[3px]">
        <Rail />
        <ComponentLibrary />
        <div className="flex min-w-0 flex-1 flex-col pr-[2px]">
          <div className="flex h-[28px] shrink-0 items-stretch border-b border-[#8fa5c0]">
            <div className="-mb-px flex w-[105px] items-center justify-between border-x border-[#8fa5c0] bg-[#edf5fd] pb-[3px] pl-[6px] pr-[9px] text-[13px] font-bold leading-4">
              新流程指示
              <button aria-label="关闭标签"><svg width="8" height="8" viewBox="0 0 8 8" stroke="#51637d"><path d="M1 1l6 6M7 1L1 7" /></svg></button>
            </div>
            <svg width="9" height="6" viewBox="0 0 9 6" fill="#1e395b" className="my-auto ml-auto mr-[5px]"><path d="M0 0h9L4.500 6z" /></svg>
          </div>
          <Ribbon />
          <MainInfo />
          <HGrip />
          <div className="flex min-h-0 flex-1">
            <ProcessArea />
            <VGrip />
            <DetailArea />
          </div>
        </div>
      </main>
      <StatusBar />
      <Taskbar />

      <div role="tooltip" className="absolute left-[868px] top-[630px] w-[318px] rounded-[2px] border border-[#767676] bg-gradient-to-b from-white to-[#e4e5f0] pb-[3px] pl-[4px] pt-px font-['Noto_Sans','Noto_Sans_CJK_SC',sans-serif] leading-[17px] text-[#575757] shadow-[3px_3px_2px_rgba(0,0,0,0.45)] [text-spacing-trim:space-all]">
        <div className="whitespace-nowrap">【曝光方式】：根据下拉选项选择曝光方式:常规默认"\"，</div>
        <div className="whitespace-nowrap">规范指定使用LDI或者CCD时，选择LDI或者CCD</div>
      </div>

      {/* Annotation arrows */}
      <svg width="700" height="260" viewBox="560 510 700 260" className="pointer-events-none absolute left-[560px] top-[510px]" stroke="#0f0" fill="#0f0">
        <path d="M585 525L1254 762M710 755L1172 743" strokeWidth="5" strokeLinecap="round" />
        <path d="M564 517l29 1-6 16zM687 755l28-8v17z" strokeWidth="1" />
      </svg>
    </div>
  );
}
